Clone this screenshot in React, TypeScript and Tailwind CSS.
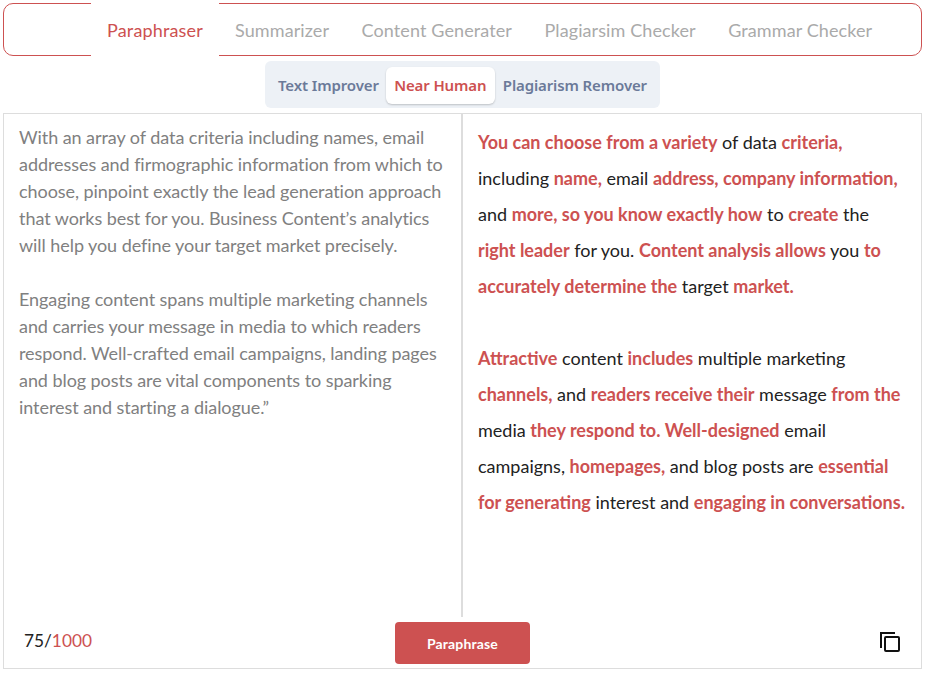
const R = ({ children }: { children: React.ReactNode }) => (
  <span className="font-bold text-[#cd5151]">{children}</span>
);
import React from "react";

const tabs = ["Summarizer", "Content Generater", "Plagiarsim Checker", "Grammar Checker"];

export default function App() {
  return (
    <div className="w-[925px] h-[673px] bg-white pt-[3px] pl-[3px] font-['Lato','Liberation_Sans',sans-serif] overflow-hidden">
      <div className="w-[919px] h-[53px] border border-[#cd5151] rounded-[10px] flex items-stretch pl-[87px]">
        <div className="w-[128px] h-[53px] -mt-px pt-[2px] bg-white flex items-center justify-center text-[18px] tracking-[0.15px] text-[#cd5151] border-b border-white">
          Paraphraser
        </div>
        <div className="flex items-center gap-[32.5px] pl-[16px] pt-[1px] text-[18px] tracking-[0.1px] text-[#aaaaaa]">
          {tabs.map((t) => (
            <span key={t}>{t}</span>
          ))}
        </div>
      </div>

      <div className="w-[919px] flex justify-center mt-[5px]">
        <div className="w-[395px] h-[47px] bg-[#edf1f6] rounded-[6px] flex items-center pl-[13px] font-['Noto_Sans','Liberation_Sans',sans-serif] text-[15px] font-semibold tracking-[-0.12px] text-[#6b7a99]">
          <span className="mt-[1px]">Text Improver</span>
          <span className="ml-[7px] mt-[1px] w-[109px] h-[37px] bg-white rounded-[6px] shadow-[0_1px_2px_rgba(0,0,0,0.2)] flex items-center justify-center text-[#cd5151]">
            Near Human
          </span>
          <span className="ml-[8px] mt-[1px]">Plagiarism Remover</span>
        </div>
      </div>

      <div className="w-[919px] h-[556px] mt-[5px] border border-[#dddddd] flex flex-col">
        <div className="h-[503px] flex">
          <div className="w-[457px] pl-[15px] pr-[8px] pt-[10px] text-[18px] leading-[27px] tracking-[-0.06px] text-[#808080]">
            <p>
              With an array of data criteria including names, email addresses and firmographic information from which to choose, pinpoint exactly the lead generation approach that works best for you. Business Content’s analytics will help you define your target market precisely.
            </p>
            <p className="mt-[27px]">
              Engaging content spans multiple marketing channels and carries your message in media to which readers respond. Well-crafted email campaigns, landing pages and blog posts are vital components to sparking interest and starting a dialogue.”
            </p>
          </div>
          <div className="w-[2px] bg-[#dddddd]" />
          <div className="flex-1 pl-[15px] pt-[10px] text-[18px] leading-[36px] text-[#222222]">
            <p>
              <R>You can choose from a variety</R> of data <R>criteria,</R>
              <br />
              including <R>name,</R> email <R>address, company information,</R>
              <br />
              and <R>more, so you know exactly how</R> to <R>create</R> the
              <br />
              <R>right leader</R> for you. <R>Content analysis allows</R> you <R>to</R>
              <br />
              <R>accurately determine the</R> target <R>market.</R>
            </p>
            <p className="mt-[36px]">
              <R>Attractive</R> content <R>includes</R> multiple marketing
              <br />
              <R>channels,</R> and <R>readers receive their</R> message <R>from the</R>
              <br />
              media <R>they respond to. Well-designed</R> email
              <br />
              campaigns, <R>homepages,</R> and blog posts are <R>essential</R>
              <br />
              <R>for generating</R> interest and <R>engaging in conversations.</R>
            </p>
          </div>
        </div>
        <div className="flex-1 flex items-center pl-[20px] pr-[21px]">
          <div className="w-[371px] text-[17.3px] text-[#222222] -mt-[4px]">
            75/<span className="text-[#cd5151]">1000</span>
          </div>
          <button className="w-[135px] h-[42px] mt-[1px] pt-[1px] bg-[#cd5151] rounded-[4px] text-white text-[14px] tracking-[0.15px] font-bold">
            Paraphrase
          </button>
          <svg className="ml-auto -mt-[1px]" width="20" height="20" viewBox="0 0 20 20" fill="none" stroke="#111111" strokeWidth="2">
            <path d="M15 1H1V16" />
            <rect x="5" y="5" width="14" height="14" rx="1" />
          </svg>
        </div>
      </div>
    </div>
  );
}
